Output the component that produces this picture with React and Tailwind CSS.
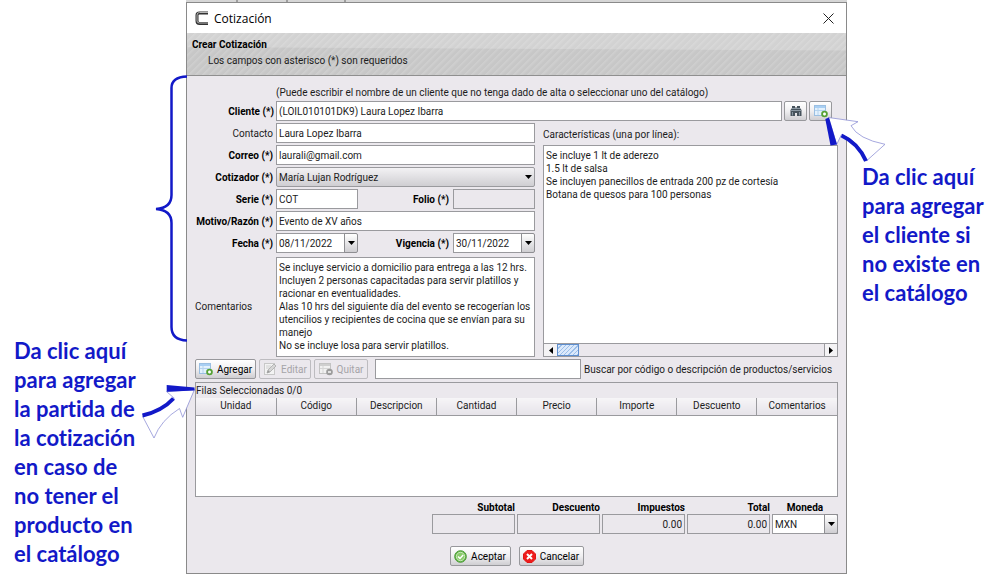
import React, { useState } from 'react';

const FIELD = 'h-5 w-full min-w-0 rounded-none border border-[#9a9a9e] bg-white px-[2px] text-[10px] leading-4 text-[#1c1c1c] outline-none';
const READONLY = 'h-5 w-full min-w-0 rounded-none border border-[#9a9a9e] bg-[#ebe8ed] px-[2px] text-right text-[10px] leading-4 text-[#1c1c1c] outline-none';
const BUTTON = 'flex h-5 items-center justify-center gap-1 rounded-[2px] border border-[#98989c] bg-linear-to-b from-white via-[#f0eff1] to-[#cfced2] text-[10px] text-black';
const LABEL = 'text-right font-bold whitespace-nowrap text-black';

const COLUMNS = ['Unidad', 'Código', 'Descripcion', 'Cantidad', 'Precio', 'Importe', 'Descuento', 'Comentarios'];

const TOTALS = [
  { id: 'subtotal', label: 'Subtotal', value: '' },
  { id: 'descuento', label: 'Descuento', value: '' },
  { id: 'impuestos', label: 'Impuestos', value: '0.00' },
  { id: 'total', label: 'Total', value: '0.00' },
];

const COMMENTS = `Se incluye servicio a domicilio para entrega a las 12 hrs.
Incluyen 2 personas capacitadas para servir platillos y
racionar en eventualidades.
Alas 10 hrs del siguiente día del evento se recogerían los
utencilios y recipientes de cocina que se envían para su
manejo
No se incluye losa para servir platillos.`;

const FEATURES = `Se incluye 1 lt de aderezo
1.5 lt de salsa
Se incluyen panecillos de entrada 200 pz de cortesía
Botana de quesos para 100 personas`;

const Caret = () => (
  <svg width="7" height="4" viewBox="0 0 7 4" aria-hidden="true">
    <path d="M0 0h7L3.5 4z" fill="#000" />
  </svg>
);

const LogoIcon = () => (
  <svg width="14" height="14" viewBox="0 0 14 14" aria-hidden="true">
    <path d="M13 2H4.500Q2 2 2 4v6q0 2.500 2.500 2.500H13" fill="none" stroke="#333" strokeWidth="3" />
    <path d="M13 1.500H4.500Q2 1.500 2 4v6q0 2 2.500 2H13" fill="none" stroke="#b5b5b5" strokeWidth="1" />
  </svg>
);

const TableIcon = ({ muted }) => (
  <svg width="14" height="14" viewBox="0 0 14 14" aria-hidden="true">
    <rect x="0.5" y="1.500" width="11" height="10" fill={muted ? '#f1f1f1' : '#e3f1fd'} stroke={muted ? '#c3c3c3' : '#9bbfe2'} />
    <path d="M1 2h10v2H1z" fill={muted ? '#cfcfcf' : '#a9cff3'} />
    <path d="M4 4v7M1 6.500h10" stroke={muted ? '#d5d5d5' : '#b5d3ee'} fill="none" />
    <circle cx="10.500" cy="10" r="3.300" fill={muted ? '#9c9c9c' : '#56a135'} />
    {muted ? (
      <path d="M9 10h3" stroke="#fff" strokeWidth="1.400" />
    ) : (
      <path d="M9 10h3M10.500 8.500v3" stroke="#fff" strokeWidth="1.600" />
    )}
  </svg>
);

const EditIcon = () => (
  <svg width="14" height="14" viewBox="0 0 14 14" aria-hidden="true">
    <rect x="1.500" y="1.500" width="10" height="11" fill="#f3f3f3" stroke="#c8c8c8" />
    <path d="M3 4h5M3 6h4" stroke="#d0d0d0" />
    <path d="M4 11l1-3 6-6 2 2-6 6z" fill="#d6d6d6" stroke="#a9a9a9" strokeWidth="0.8" />
    <path d="M4 11l1-3 2 2z" fill="#9b9b9b" />
  </svg>
);

const BinocularsIcon = () => (
  <svg width="12" height="12" viewBox="0 0 12 12" aria-hidden="true">
    <path d="M2 1h3v1.500h2V1h3v2l1.500 2v6H7V8H5v3H.5V5L2 3z" fill="#46525c" />
    <path d="M2 3.500h8M1 5.500h10" stroke="#8b98a3" fill="none" />
    <path d="M2.500 7v3.500M9.500 7v3.500" stroke="#8795a0" fill="none" />
  </svg>
);

const AcceptIcon = () => (
  <svg width="13" height="13" viewBox="0 0 13 13" aria-hidden="true">
    <circle cx="6.500" cy="6.500" r="5.800" fill="#63b544" stroke="#4b9a39" />
    <circle cx="6.500" cy="6.500" r="4.200" fill="#8bcb6d" stroke="#d8efcf" strokeWidth="0.8" />
    <path d="M4 6.500l2 2 3.200-3.500" fill="none" stroke="#fff" strokeWidth="1.500" />
  </svg>
);

const CancelIcon = () => (
  <svg width="13" height="13" viewBox="0 0 13 13" aria-hidden="true">
    <path d="M4 .5h5L12.500 4v5L9 12.500H4L.5 9V4z" fill="#ee1c1c" stroke="#e01515" strokeLinejoin="round" />
    <path d="M4 4l5 5M9 4l-5 5" stroke="#fff" strokeWidth="2" />
  </svg>
);

const DateField = ({ id, defaultValue }) => (
  <div className="flex h-5">
    <input id={id} className={FIELD} defaultValue={defaultValue} />
    <button
      type="button"
      aria-label="Abrir calendario"
      className="-ml-px flex w-[14px] shrink-0 items-center justify-center rounded-r-[2px] border border-[#8e8e92] bg-linear-to-b from-white to-[#cfced2]"
    >
      <Caret />
    </button>
  </div>
);

// Hand-drawn help marks that sit on top of the window
const Brace = () => (
  <svg className="pointer-events-none absolute top-[71px] -left-8" width="33" height="274" viewBox="0 0 33 274" aria-hidden="true">
    <path
      d="M32 2.500Q16.500 3 16.500 14V121Q16.500 134 1 135Q16.500 136 16.500 149V253Q16.500 266 32 266.500"
      fill="none"
      stroke="#1219c8"
      strokeWidth="2.500"
    />
  </svg>
);

const ClientArrow = () => (
  <svg className="pointer-events-none absolute top-[112px] -right-[41px]" width="64" height="48" viewBox="823 115 64 48" aria-hidden="true">
    <path
      d="M828.500 117.500L858 121.700L851 125.700Q858 139 885 144.300L866.700 160.700Q859 141 841.500 134.500L836.700 144.500Z"
      fill="#fff"
      stroke="#8f92d6"
      strokeWidth="0.8"
    />
    <path d="M825.300 119L829 117.500L837 144.500L830.500 145.500Z" fill="#1219c8" />
    <path d="M841.500 135.500Q858 143 866 161" fill="none" stroke="#1219c8" strokeWidth="4" />
  </svg>
);

const ItemArrow = () => (
  <svg className="pointer-events-none absolute top-[379px] -left-[47px]" width="56" height="58" viewBox="140 382 56 58" aria-hidden="true">
    <path
      d="M166.700 391.700L174.300 398.300Q160 412 142.700 416.500L154 438Q161 420 179.500 408.500L182.700 417.300L194.500 389.500Z"
      fill="#fff"
      stroke="#8f92d6"
      strokeWidth="0.8"
    />
    <path d="M166.700 385L194.500 387.500V390.500L166.700 391.700Z" fill="#1219c8" />
    <path d="M173.500 398.500Q162 411 142.500 415.500" fill="none" stroke="#1219c8" strokeWidth="4" />
  </svg>
);

const Note = ({ lines, className }) => (
  <p className={`font-['Lato',sans-serif] text-[22px] leading-[29px] font-bold whitespace-nowrap text-[#1219c8] [font-variant-ligatures:none] ${className}`}>
    {lines.map((line) => (
      <span key={line} className="block">{line}</span>
    ))}
  </p>
);

const QuoteForm = () => (
  <div className="grid grid-cols-[78px_minmax(0,1fr)] items-center gap-x-[3px] gap-y-[2px]">
    <label htmlFor="contacto" className="text-right">Contacto</label>
    <input id="contacto" className={FIELD} defaultValue="Laura Lopez Ibarra" />

    <label htmlFor="correo" className={LABEL}>Correo (*)</label>
    <input id="correo" className={FIELD} defaultValue="laurali@gmail.com" />

    <label htmlFor="cotizador" className={LABEL}>Cotizador (*)</label>
    <div className="relative">
      <select
        id="cotizador"
        className="block h-5 w-full appearance-none rounded-[2px] border border-[#9a9a9e] bg-linear-to-b from-[#f3f2f4] to-[#cfced2] px-[2px] text-[10px] text-[#1c1c1c]"
      >
        <option>María Lujan Rodríguez</option>
      </select>
      <span className="pointer-events-none absolute inset-y-0 right-[3px] flex items-center"><Caret /></span>
    </div>

    <label htmlFor="serie" className={LABEL}>Serie (*)</label>
    <div className="grid grid-cols-[82px_minmax(0,1fr)_82px] items-center gap-x-1">
      <input id="serie" className={FIELD} defaultValue="COT" />
      <label htmlFor="folio" className={LABEL}>Folio (*)</label>
      <input id="folio" className={READONLY} readOnly />
    </div>

    <label htmlFor="motivo" className={LABEL}>Motivo/Razón (*)</label>
    <input id="motivo" className={FIELD} defaultValue="Evento de XV años" />

    <label htmlFor="fecha" className={LABEL}>Fecha (*)</label>
    <div className="grid grid-cols-[82px_minmax(0,1fr)_82px] items-center gap-x-1">
      <DateField id="fecha" defaultValue="08/11/2022" />
      <label htmlFor="vigencia" className={LABEL}>Vigencia (*)</label>
      <DateField id="vigencia" defaultValue="30/11/2022" />
    </div>

    <label htmlFor="comentarios">Comentarios</label>
    <textarea
      id="comentarios"
      className="mt-[2px] block h-[100px] w-full resize-none overflow-hidden border border-[#9a9a9e] bg-white px-[2px] pt-[3px] text-[10px] leading-[13px] text-[#1c1c1c] outline-none"
      defaultValue={COMMENTS}
    />
  </div>
);

const FeaturesPanel = () => (
  <div className="flex flex-col">
    <label htmlFor="caracteristicas" className="flex h-[22px] items-center">Características (una por línea):</label>
    <div className="flex flex-1 flex-col border border-[#9a9a9e] bg-white">
      <textarea
        id="caracteristicas"
        className="block w-full flex-1 resize-none overflow-hidden px-[2px] pt-[3px] text-[10px] leading-[13px] whitespace-pre text-[#1c1c1c] outline-none"
        defaultValue={FEATURES}
      />
      <div className="flex h-[13px] border-t border-[#9a9a9e] bg-[#ebe8ed]">
        <button type="button" aria-label="Desplazar a la izquierda" className="flex w-[13px] items-center justify-center bg-[#f4f3f5]">
          <svg width="4" height="7" viewBox="0 0 4 7"><path d="M4 0v7L0 3.500z" /></svg>
        </button>
        <div className="w-[22px] border border-[#5f8fcf] bg-[repeating-linear-gradient(135deg,#dbe9fb_0px,#dbe9fb_2px,#9cbfe9_2px,#9cbfe9_3px)]" />
        <button type="button" aria-label="Desplazar a la derecha" className="ml-auto flex w-[13px] items-center justify-center border-l border-[#9a9a9e] bg-[#f4f3f5]">
          <svg width="4" height="7" viewBox="0 0 4 7"><path d="M0 0v7l4-3.500z" /></svg>
        </button>
      </div>
    </div>
  </div>
);

const ItemsTable = () => (
  <div className="mt-[3px] h-[115px] border border-[#9a9a9e] bg-white">
    <p className="h-[15px] bg-[#ebe8ed] leading-[15px]">Filas Seleccionadas 0/0</p>
    <table className="w-full table-fixed border-collapse">
      <thead>
        <tr>
          {COLUMNS.map((column) => (
            <th
              key={column}
              scope="col"
              className="h-[17px] border-r border-b border-[#9a9a9e] bg-linear-to-b from-[#f6f5f7] to-[#e6e3e9] p-0 text-center leading-4 font-normal last:border-r-0"
            >
              {column}
            </th>
          ))}
        </tr>
      </thead>
      <tbody />
    </table>
  </div>
);

const Totals = () => {
  const [currency, setCurrency] = useState('MXN');

  return (
    <div className="mt-1 flex justify-end gap-[2px]">
      {TOTALS.map((total) => (
        <div key={total.id} className="w-[83px]">
          <label htmlFor={total.id} className="block h-[13px] text-right leading-[13px] font-bold text-black">{total.label}</label>
          <input id={total.id} className={READONLY} defaultValue={total.value} readOnly />
        </div>
      ))}
      <div className="w-[66px]">
        <label htmlFor="moneda" className="block h-[13px] text-center leading-[13px] font-bold text-black">Moneda</label>
        <div className="relative">
          <select
            id="moneda"
            className="block h-5 w-full appearance-none border border-[#9a9a9e] bg-white px-[2px] text-[10px] text-[#1c1c1c]"
            value={currency}
            onChange={(e) => setCurrency(e.target.value)}
          >
            <option>MXN</option>
            <option>USD</option>
          </select>
          <span className="pointer-events-none absolute inset-y-0 right-0 flex w-[14px] items-center justify-center rounded-r-[2px] border border-[#8e8e92] bg-linear-to-b from-white to-[#cfced2]">
            <Caret />
          </span>
        </div>
      </div>
    </div>
  );
};

const QuoteDialog = () => (
  <section className="relative border border-[#8a8a8a] bg-[#ebe8ed] font-['Roboto','Noto_Sans',sans-serif] text-[10px] leading-[13px] text-[#1c1c1c]">
    <div className="flex h-[30px] items-center bg-white pr-3 pl-2">
      <LogoIcon />
      <h1 className="ml-[5px] font-['Open_Sans',sans-serif] text-[12px] text-black">Cotización</h1>
      <button type="button" aria-label="Cerrar" className="ml-auto">
        <svg width="11" height="11" viewBox="0 0 11 11"><path d="M.5.5l10 10M10.500.5l-10 10" stroke="#222" fill="none" /></svg>
      </button>
    </div>

    <header className="h-[43px] border-b border-[#8f8f8f] bg-[repeating-linear-gradient(135deg,#ffffff20_0px,#ffffff20_1px,transparent_3px,transparent_5px),linear-gradient(180.3deg,#d2d2d2_17px,#c7c7c7_18px)] pt-[5px] pl-[5px]">
      <h2 className="font-bold text-black">Crear Cotización</h2>
      <p className="mt-[3px] ml-4">Los campos con asterisco (*) son requeridos</p>
    </header>

    <form className="px-2 pt-[10px] pb-[7px]" onSubmit={(e) => e.preventDefault()}>
      <p className="ml-[81px] whitespace-nowrap">(Puede escribir el nombre de un cliente que no tenga dado de alta o seleccionar uno del catálogo)</p>
      <div className="mt-[2px] mb-[2px] grid grid-cols-[79px_minmax(0,1fr)_23px_23px] items-center gap-x-[2px] pr-[6px]">
        <label htmlFor="cliente" className={LABEL}>Cliente (*)</label>
        <input id="cliente" className={FIELD} defaultValue="(LOIL010101DK9) Laura Lopez Ibarra" />
        <button type="button" aria-label="Buscar cliente" className={BUTTON}><BinocularsIcon /></button>
        <button type="button" aria-label="Agregar cliente" className={BUTTON}><TableIcon /></button>
      </div>

      <div className="grid grid-cols-[minmax(0,1fr)_295px] gap-x-2">
        <QuoteForm />
        <FeaturesPanel />
      </div>

      <div className="mt-[2px] flex items-center gap-[3px]">
        <button type="button" className={`${BUTTON} w-[61px]`}><TableIcon />Agregar</button>
        <button type="button" disabled className="flex h-5 w-[52px] items-center justify-center gap-1 rounded-[2px] border border-[#bdbcc0] text-[#a5a4a8]"><EditIcon />Editar</button>
        <button type="button" disabled className="flex h-5 w-[54px] items-center justify-center gap-1 rounded-[2px] border border-[#bdbcc0] text-[#a5a4a8]"><TableIcon muted />Quitar</button>
        <div className="ml-1 flex flex-1 items-center gap-[3px]">
          <input id="buscar" className={FIELD} />
          <label htmlFor="buscar" className="w-[254px] shrink-0 whitespace-nowrap">Buscar por código o descripción de productos/servicios</label>
        </div>
      </div>

      <ItemsTable />
      <Totals />

      <div className="mt-3 flex justify-center gap-2">
        <button type="submit" className={`${BUTTON} w-[61px]`}><AcceptIcon />Aceptar</button>
        <button type="button" className={`${BUTTON} w-[65px]`}><CancelIcon />Cancelar</button>
      </div>
    </form>

    <Brace />
    <ClientArrow />
    <ItemArrow />
  </section>
);

export default function App() {
  return (
    <main className="grid min-h-screen grid-cols-[186px_minmax(0,1fr)_160px] items-start bg-white">
      <Note
        className="pt-[336px] pl-[14px]"
        lines={['Da clic aquí', 'para agregar', 'la partida de', 'la cotización', 'en caso de', 'no tener el', 'producto en', 'el catálogo']}
      />
      <div>
        <div className="flex h-[2px] gap-[2px] bg-[#9d9d9d]">
          <div className="w-[50px] bg-[#d6d6d6]" />
          <div className="w-12 bg-[#d6d6d6]" />
          <div className="w-14 bg-[#d6d6d6]" />
          <div className="flex-1 bg-[#d6d6d6]" />
        </div>
        <QuoteDialog />
      </div>
      <Note
        className="pt-[162px] pl-[15px]"
        lines={['Da clic aquí', 'para agregar', 'el cliente si', 'no existe en', 'el catálogo']}
      />
    </main>
  );
}
